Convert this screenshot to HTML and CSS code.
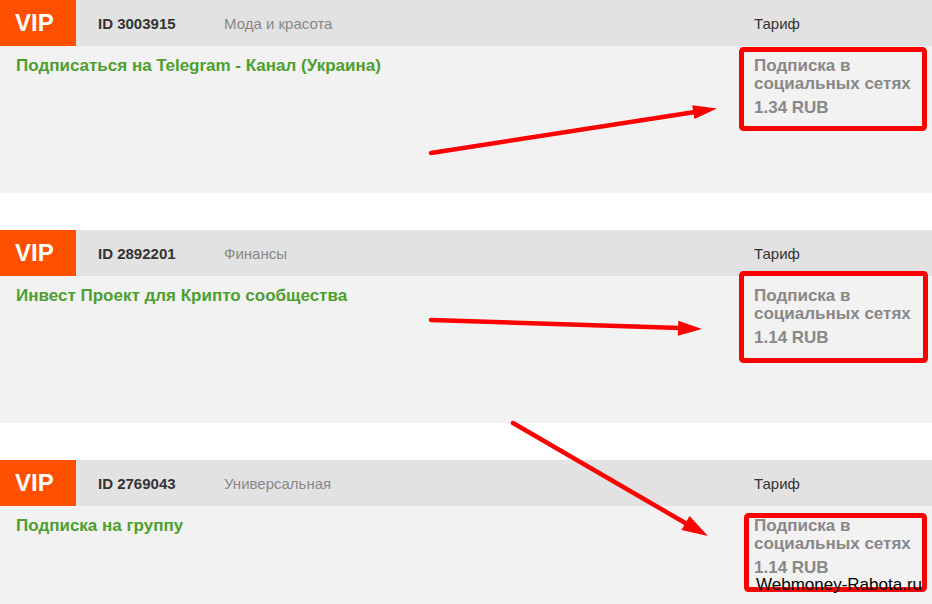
FILE: index.html
```html
<!DOCTYPE html>
<html lang="ru">
<head>
    <meta charset="UTF-8">
    <title>Задания VIP</title>
    <link rel="stylesheet" href="styles.css">
</head>
<body>
    <div class="task">
        <div class="task-head">
            <div class="vip">VIP</div>
            <div class="task-id">ID 3003915</div>
            <div class="task-cat">Мода и красота</div>
            <div class="task-tariff">Тариф</div>
        </div>
        <div class="task-body">
            <a class="task-title" href="#">Подписаться на Telegram - Канал (Украина)</a>
            <div class="tariff">
                <div class="tariff-name">Подписка в социальных сетях</div>
                <div class="tariff-price">1.34 RUB</div>
            </div>
        </div>
    </div>

    <div class="task">
        <div class="task-head">
            <div class="vip">VIP</div>
            <div class="task-id">ID 2892201</div>
            <div class="task-cat">Финансы</div>
            <div class="task-tariff">Тариф</div>
        </div>
        <div class="task-body">
            <a class="task-title" href="#">Инвест Проект для Крипто сообщества</a>
            <div class="tariff">
                <div class="tariff-name">Подписка в социальных сетях</div>
                <div class="tariff-price">1.14 RUB</div>
            </div>
        </div>
    </div>

    <div class="task">
        <div class="task-head">
            <div class="vip">VIP</div>
            <div class="task-id">ID 2769043</div>
            <div class="task-cat">Универсальная</div>
            <div class="task-tariff">Тариф</div>
        </div>
        <div class="task-body">
            <a class="task-title" href="#">Подписка на группу</a>
            <div class="tariff">
                <div class="tariff-name">Подписка в социальных сетях</div>
                <div class="tariff-price">1.14 RUB</div>
            </div>
        </div>
    </div>

    <!-- red marks on top of the list -->
    <svg class="marks" width="932" height="604" viewBox="0 0 932 604">
        <g fill="none" stroke="#ff0000" stroke-width="5">
            <rect x="741.5" y="49.5" width="183" height="79" rx="2"/>
            <rect x="741.5" y="273.5" width="184" height="87" rx="2"/>
            <rect x="746.5" y="515.5" width="178" height="74" rx="2"/>
        </g>
        <g stroke="#ff0000" stroke-width="4.5" stroke-linecap="round">
            <line x1="431" y1="153" x2="695" y2="112"/>
            <line x1="431" y1="320" x2="680" y2="328"/>
            <line x1="513" y1="423" x2="687" y2="524"/>
        </g>
        <g fill="#ff0000">
            <polygon points="717,108.5 694.4,119.1 692.2,105.3"/>
            <polygon points="702,329 677.8,335.7 678.3,320.7"/>
            <polygon points="708,536 681.5,529.9 689.5,516.1"/>
        </g>
    </svg>
    <div class="site">Webmoney-Rabota.ru</div>
</body>
</html>
```

FILE: styles.css
```css
body {
    font-family: "Liberation Sans", Arial, sans-serif;
    background-color: #ffffff;
    margin: 0;
    position: relative;
    width: 932px;
    height: 604px;
    overflow: hidden;
}
.task {
    margin-bottom: 37px;
}
.task-head {
    display: grid;
    grid-template-columns: 76px 148px 1fr 178px;
    align-items: center;
    height: 46px;
    background-color: #e2e2e2;
    font-size: 15px;
}
.vip {
    height: 46px;
    line-height: 46px;
    padding-left: 15px;
    background-color: #ff5000;
    color: #ffffff;
    font-size: 24px;
    font-weight: bold;
}
.task-id {
    padding-left: 22px;
    color: #333333;
    font-weight: bold;
}
.task-cat {
    color: #888888;
}
.task-tariff {
    color: #333333;
}
.task-body {
    display: grid;
    grid-template-columns: 1fr 178px;
    align-items: start;
    height: 147px;
    background-color: #f2f2f2;
    font-size: 17px;
    font-weight: bold;
    line-height: 18px;
}
.task-title {
    padding: 11px 0 0 16px;
    color: #4d9f2f;
    text-decoration: none;
}
.tariff {
    padding-top: 11px;
    color: #888888;
}
.tariff-price {
    margin-top: 6px;
}
.marks {
    position: absolute;
    top: 0;
    left: 0;
    pointer-events: none;
}
.site {
    position: absolute;
    left: 756px;
    top: 576px;
    font-size: 17px;
    line-height: 17px;
    color: #000000;
}
```
